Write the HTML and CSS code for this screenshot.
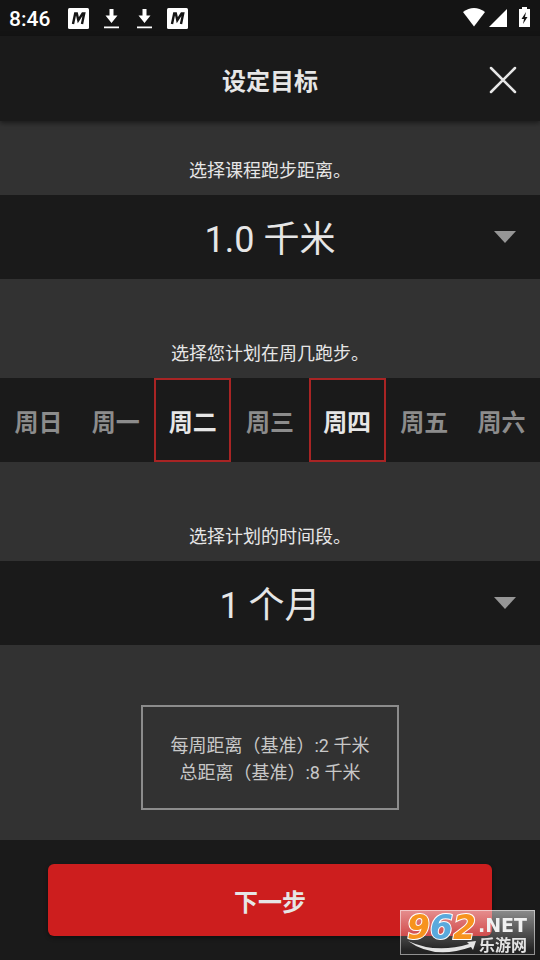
FILE: index.html
```html
<!DOCTYPE html>
<html lang="zh-CN">

<head>
    <meta charset="utf-8">
    <title>设定目标</title>
    <meta name="viewport" content="width=device-width, initial-scale=1">
    <link rel="stylesheet" href="styles.css">
</head>

<body>
    <div class="statusbar">
        <span class="clock">8:46</span>
        <div class="notifications">
            <svg class="icon" width="21" height="21" viewBox="0 0 21 21">
                <rect width="21" height="21" rx="1.5" fill="#fff"/>
                <path d="M5 16 7.2 5.5h1.6l1.5 6.6 4.3-6.6h1.6L14 16" fill="none" stroke="#141414" stroke-width="2.4"/>
            </svg>
            <svg class="icon" width="21" height="21" viewBox="0 0 21 21">
                <path d="M8.500 1h4v6.500h4L10.500 15 4.500 7.500h4zM3 18.500h15v1.800H3z" fill="#fff"/>
            </svg>
            <svg class="icon" width="21" height="21" viewBox="0 0 21 21">
                <path d="M8.500 1h4v6.500h4L10.500 15 4.500 7.500h4zM3 18.500h15v1.800H3z" fill="#fff"/>
            </svg>
            <svg class="icon" width="21" height="21" viewBox="0 0 21 21">
                <rect width="21" height="21" rx="1.5" fill="#fff"/>
                <path d="M5 16 7.2 5.5h1.6l1.5 6.6 4.3-6.6h1.6L14 16" fill="none" stroke="#141414" stroke-width="2.4"/>
            </svg>
        </div>
        <svg class="system" width="68" height="20" viewBox="0 0 68 20">
            <path d="M0 5Q11 -3 22 5L11 19.500z" fill="#fff"/>
            <path d="M26 20 44 2v18z" fill="#fff"/>
            <path d="M59 0h5v2h3v18H56V2h3z" fill="#fff"/>
            <path d="M63 5 58.500 12h2.500L60 17 64.500 10H62z" fill="#141414"/>
        </svg>
    </div>

    <header class="topnav">
        <h1>设定目标</h1>
        <button class="close" type="button" aria-label="关闭">
            <svg width="28" height="28" viewBox="0 0 28 28">
                <path d="M2 2 26 26M26 2 2 26" stroke="#e6e6e6" stroke-width="2.500" stroke-linecap="round"/>
            </svg>
        </button>
    </header>

    <form class="content">
        <label class="caption first" for="distance">选择课程跑步距离。</label>
        <div class="picker">
            <select id="distance">
                <option>1.0 千米</option>
                <option>2.0 千米</option>
                <option>5.0 千米</option>
            </select>
        </div>

        <fieldset>
            <legend class="caption">选择您计划在周几跑步。</legend>
            <div class="days">
                <label class="day"><input type="checkbox" name="day">周日</label>
                <label class="day"><input type="checkbox" name="day">周一</label>
                <label class="day"><input type="checkbox" name="day" checked>周二</label>
                <label class="day"><input type="checkbox" name="day">周三</label>
                <label class="day"><input type="checkbox" name="day" checked>周四</label>
                <label class="day"><input type="checkbox" name="day">周五</label>
                <label class="day"><input type="checkbox" name="day">周六</label>
            </div>
        </fieldset>

        <label class="caption" for="period">选择计划的时间段。</label>
        <div class="picker">
            <select id="period">
                <option>1 个月</option>
                <option>2 个月</option>
                <option>3 个月</option>
            </select>
        </div>

        <div class="summary">
            <p>每周距离（基准）:2 千米</p>
            <p>总距离（基准）:8 千米</p>
        </div>

        <div class="footer">
            <button class="next" type="button">下一步</button>
        </div>
    </form>

    <div class="watermark">
        <svg width="135" height="45" viewBox="0 0 135 45">
            <text class="digits" x="7" y="29"><tspan fill="#f7931e">9</tspan><tspan fill="#5aa9dc">6</tspan><tspan fill="#f7931e">2</tspan></text>
            <path d="M8 31Q36 44 69 34L67 32 76 31 73 40 71 37Q34 50 8 31z" fill="#e4e4e4"/>
            <text class="net" x="78" y="22">.NET</text>
            <text class="site" x="79" y="41">乐游网</text>
        </svg>
    </div>
</body>

</html>
```
FILE: styles.css
```css
* {
    box-sizing: border-box;
}

body {
    margin: 0;
    min-height: 100vh;
    display: flex;
    flex-direction: column;
    background-color: #323232;
    color: #e6e6e6;
    font-family: Roboto, "Noto Sans CJK SC", sans-serif;
}

button,
select {
    font-family: inherit;
    color: inherit;
    border: none;
    cursor: pointer;
}

.statusbar {
    display: flex;
    align-items: center;
    height: 36px;
    padding: 0 9px;
    background-color: #141414;
}

.clock {
    width: 59px;
    padding-top: 2px;
    font-size: 21px;
    font-weight: 500;
    color: #fff;
}

.notifications {
    display: flex;
    gap: 12px;
}

.system {
    margin-left: auto;
    margin-bottom: 2px;
}

.topnav {
    position: relative;
    display: flex;
    align-items: center;
    justify-content: center;
    height: 85px;
    padding-top: 2px;
    background-color: #1a1a1a;
    box-shadow: 0 2px 5px rgba(0, 0, 0, .5);
}

h1 {
    margin: 0;
    font-size: 24px;
    font-weight: bold;
}

.close {
    position: absolute;
    right: 15px;
    display: flex;
    padding: 8px;
    background: none;
}

.content {
    flex: 1;
    display: flex;
    flex-direction: column;
}

fieldset {
    margin: 0;
    padding: 0;
    border: none;
    min-width: 0;
}

.caption {
    display: block;
    width: 100%;
    padding: 62px 0 11px;
    font-size: 18px;
    line-height: 26px;
    text-align: center;
}

.first {
    padding-top: 37px;
}

.picker {
    position: relative;
}

.picker select {
    appearance: none;
    display: block;
    width: 100%;
    height: 84px;
    padding: 5px 0 0;
    background-color: #1a1a1a;
    font-size: 36px;
    text-align: center;
    text-align-last: center;
    outline: none;
}

/* arrow over the right side of the select */
.picker::after {
    content: "";
    position: absolute;
    top: 36px;
    right: 24px;
    border: 11px solid transparent;
    border-top: 12px solid #969696;
    border-bottom: none;
    pointer-events: none;
}

.days {
    display: grid;
    grid-template-columns: repeat(7, 1fr);
    height: 84px;
    background-color: #1a1a1a;
}

.day {
    display: flex;
    align-items: center;
    justify-content: center;
    border: 2px solid transparent;
    font-size: 24px;
    font-weight: bold;
    color: #8c8c8c;
    cursor: pointer;
}

.day input {
    position: absolute;
    opacity: 0;
    pointer-events: none;
}

.day:has(input:checked) {
    border-color: #a82424;
    color: #e6e6e6;
}

.summary {
    align-self: center;
    margin: 60px 0 30px;
    padding: 25px 28px 22px;
    border: 2px solid #8c8c8c;
    font-size: 18px;
    line-height: 27px;
    text-align: center;
    color: #c8c8c8;
}

.summary p {
    margin: 0;
}

.footer {
    flex: 1;
    padding: 24px 48px;
    background-color: #1a1a1a;
}

.next {
    display: block;
    width: 100%;
    height: 72px;
    border-radius: 6px;
    background-color: #cd1e1e;
    box-shadow: 0 2px 4px rgba(0, 0, 0, .4);
    font-size: 24px;
    font-weight: bold;
}

.watermark {
    position: fixed;
    right: 5px;
    bottom: 5px;
    display: flex;
    outline: 1px solid rgba(255, 255, 255, .5);
    outline-offset: -1px;
    background: linear-gradient(rgba(255, 255, 255, .5), rgba(120, 120, 120, .1) 90%);
    pointer-events: none;
}

.watermark svg {
    overflow: visible;
}

.digits {
    font: italic bold 33px "DejaVu Sans", sans-serif;
    stroke: #fff;
    stroke-width: 2px;
    paint-order: stroke;
}

.net {
    font: bold 19px "DejaVu Sans", sans-serif;
    fill: #f0f0f0;
}

.site {
    font: bold 16px "Noto Sans CJK SC", sans-serif;
    fill: #e4e4e4;
}
```
